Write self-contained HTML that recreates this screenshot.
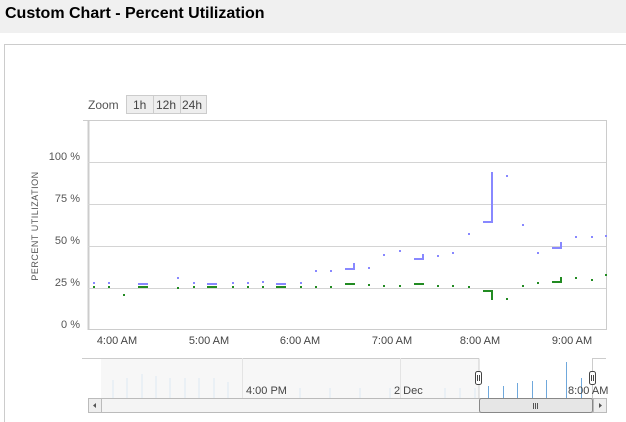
<!DOCTYPE html>
<html><head><meta charset="utf-8"><style>
html,body{margin:0;width:626px;height:422px;background:#fff;font-family:"Liberation Sans",sans-serif;overflow:hidden;position:relative}
.t{position:absolute;left:0;top:0;width:626px;height:33px;background:#f0f0f0;font-weight:bold;font-size:16px;line-height:28px;padding-left:5px;box-sizing:border-box;color:#000}
.box{position:absolute;left:4px;top:44px;width:621px;height:377px;border:1px solid #ccc;border-bottom:none;border-right:none}
svg{position:absolute;left:0;top:0}
</style></head><body>
<div class="t">Custom Chart - Percent Utilization</div>
<div class="box"></div>
<svg width="626" height="422" font-family="Liberation Sans, DejaVu Sans, sans-serif">
<text x="88" y="109" font-size="12" fill="#555">Zoom</text>
<rect x="126.5" y="95.5" width="80" height="18" fill="#eee" stroke="#ccc"/>
<line x1="153.5" y1="96" x2="153.5" y2="113" stroke="#ccc"/><line x1="180.5" y1="96" x2="180.5" y2="113" stroke="#ccc"/>
<text x="133" y="109" font-size="12" fill="#444">1h</text><text x="156" y="109" font-size="12" fill="#444">12h</text><text x="182" y="109" font-size="12" fill="#444">24h</text>
<line x1="83" y1="120.5" x2="607" y2="120.5" stroke="#ccc"/>
<line x1="88.5" y1="121" x2="88.5" y2="330" stroke="#ccc" stroke-width="2"/>
<line x1="606.5" y1="121" x2="606.5" y2="330" stroke="#ccc"/>
<g stroke="#d4d4d4"><line x1="88" y1="162.5" x2="606" y2="162.5"/><line x1="88" y1="204.5" x2="606" y2="204.5"/><line x1="88" y1="246.5" x2="606" y2="246.5"/><line x1="88" y1="288.5" x2="606" y2="288.5"/></g>
<line x1="88" y1="329.5" x2="607" y2="329.5" stroke="#ccc"/>
<g font-size="11" fill="#555" text-anchor="end"><text x="80" y="160">100 %</text><text x="80" y="202">75 %</text><text x="80" y="244">50 %</text><text x="80" y="286">25 %</text><text x="80" y="328">0 %</text></g>
<text transform="translate(38,226) rotate(-90)" font-size="9" fill="#555" text-anchor="middle" letter-spacing=".5">PERCENT UTILIZATION</text>
<g font-size="11" fill="#444" text-anchor="middle"><text x="117" y="344">4:00 AM</text><text x="209" y="344">5:00 AM</text><text x="300" y="344">6:00 AM</text><text x="392" y="344">7:00 AM</text><text x="480" y="344">8:00 AM</text><text x="572" y="344">9:00 AM</text></g>
<g fill="#8888ff">
<rect x="93" y="282" width="2" height="2"/><rect x="108" y="282" width="2" height="2"/><rect x="177" y="277" width="2" height="2"/><rect x="193" y="282" width="2" height="2"/><rect x="232" y="282" width="2" height="2"/><rect x="247" y="282" width="2" height="2"/><rect x="262" y="281" width="2" height="2"/><rect x="300" y="282" width="2" height="2"/><rect x="315" y="270" width="2" height="2"/><rect x="330" y="270" width="2" height="2"/><rect x="368" y="267" width="2" height="2"/><rect x="383" y="254" width="2" height="2"/><rect x="399" y="250" width="2" height="2"/><rect x="437" y="255" width="2" height="2"/><rect x="452" y="252" width="2" height="2"/><rect x="468" y="233" width="2" height="2"/><rect x="506" y="175" width="2" height="2"/><rect x="522" y="224" width="2" height="2"/><rect x="537" y="252" width="2" height="2"/><rect x="575" y="236" width="2" height="2"/><rect x="591" y="236" width="2" height="2"/><rect x="605" y="235" width="2" height="2"/><rect x="560" y="247" width="2" height="2"/>
<rect x="138" y="283" width="10" height="2"/><rect x="207" y="283" width="10" height="2"/><rect x="276" y="283" width="10" height="2"/><rect x="345" y="268" width="10" height="2"/><rect x="353" y="263" width="2" height="6"/><rect x="414" y="258" width="10" height="2"/><rect x="422" y="254" width="2" height="5"/><rect x="483" y="221" width="10" height="2"/><rect x="491" y="172" width="2" height="50"/><rect x="552" y="247" width="10" height="2"/><rect x="560" y="242" width="2" height="6"/>
</g>
<g fill="#228b22">
<rect x="93" y="286" width="2" height="2"/><rect x="108" y="286" width="2" height="2"/><rect x="123" y="294" width="2" height="2"/><rect x="177" y="287" width="2" height="2"/><rect x="193" y="286" width="2" height="2"/><rect x="232" y="286" width="2" height="2"/><rect x="247" y="286" width="2" height="2"/><rect x="262" y="286" width="2" height="2"/><rect x="300" y="286" width="2" height="2"/><rect x="315" y="286" width="2" height="2"/><rect x="330" y="286" width="2" height="2"/><rect x="368" y="284" width="2" height="2"/><rect x="383" y="285" width="2" height="2"/><rect x="399" y="285" width="2" height="2"/><rect x="437" y="285" width="2" height="2"/><rect x="452" y="285" width="2" height="2"/><rect x="468" y="286" width="2" height="2"/><rect x="506" y="298" width="2" height="2"/><rect x="522" y="285" width="2" height="2"/><rect x="537" y="282" width="2" height="2"/><rect x="575" y="277" width="2" height="2"/><rect x="591" y="279" width="2" height="2"/><rect x="605" y="274" width="2" height="2"/>
<rect x="138" y="286" width="10" height="2"/><rect x="207" y="286" width="10" height="2"/><rect x="276" y="286" width="10" height="2"/><rect x="345" y="283" width="10" height="2"/><rect x="414" y="283" width="10" height="2"/><rect x="483" y="290" width="10" height="2"/><rect x="491" y="290" width="2" height="10"/><rect x="552" y="281" width="10" height="2"/><rect x="560" y="277" width="2" height="5"/>
</g>
<rect x="101" y="358" width="378" height="40" fill="#f7f7f7"/>
<line x1="82" y1="358.5" x2="479" y2="358.5" stroke="#ccc"/><line x1="479" y1="358.5" x2="479" y2="398" stroke="#ccc"/>
<line x1="592" y1="358.5" x2="606" y2="358.5" stroke="#ccc"/><line x1="592.5" y1="358.5" x2="592.5" y2="398" stroke="#ccc"/>
<line x1="242.5" y1="358" x2="242.5" y2="398" stroke="#e4e4e4"/><line x1="400.5" y1="358" x2="400.5" y2="398" stroke="#e4e4e4"/>
<g stroke="#dce8f3"><line x1="113" y1="380" x2="113" y2="398"/><line x1="127" y1="378" x2="127" y2="398"/><line x1="142" y1="374" x2="142" y2="398"/><line x1="156" y1="376" x2="156" y2="398"/><line x1="170" y1="378" x2="170" y2="398"/><line x1="185" y1="378" x2="185" y2="398"/><line x1="199" y1="378" x2="199" y2="398"/><line x1="214" y1="378" x2="214" y2="398"/><line x1="228" y1="382" x2="228" y2="398"/><line x1="300" y1="388" x2="300" y2="398"/><line x1="330" y1="388" x2="330" y2="398"/><line x1="360" y1="388" x2="360" y2="398"/><line x1="390" y1="388" x2="390" y2="398"/><line x1="445" y1="388" x2="445" y2="398"/><line x1="460" y1="388" x2="460" y2="398"/><line x1="475" y1="388" x2="475" y2="398"/></g>
<g stroke="#6fa8dc"><line x1="488.5" y1="386" x2="488.5" y2="398"/><line x1="503.5" y1="386" x2="503.5" y2="398"/><line x1="517.5" y1="383" x2="517.5" y2="398"/><line x1="532.5" y1="381" x2="532.5" y2="398"/><line x1="546.5" y1="380" x2="546.5" y2="398"/><line x1="566.5" y1="362" x2="566.5" y2="398"/><line x1="581.5" y1="378" x2="581.5" y2="398"/></g>
<text x="246" y="394" font-size="11" fill="#444">4:00 PM</text><text x="394" y="394" font-size="11" fill="#444">2 Dec</text><text x="568" y="394" font-size="11" fill="#444">8:00 AM</text>
<rect x="475.5" y="371.5" width="6" height="13" rx="2" fill="#fff" stroke="#444"/><line x1="477.5" y1="375" x2="477.5" y2="381" stroke="#444"/><line x1="479.5" y1="375" x2="479.5" y2="381" stroke="#444"/>
<rect x="589.5" y="371.5" width="6" height="13" rx="2" fill="#fff" stroke="#444"/><line x1="591.5" y1="375" x2="591.5" y2="381" stroke="#444"/><line x1="593.5" y1="375" x2="593.5" y2="381" stroke="#444"/>
<rect x="88.5" y="398.5" width="518" height="14" fill="#f4f4f4" stroke="#bbb"/>
<rect x="88.5" y="398.5" width="13" height="14" fill="#eee" stroke="#bbb"/><rect x="593.5" y="398.5" width="13" height="14" fill="#eee" stroke="#bbb"/>
<path d="M96 403 L93 405.5 L96 408Z" fill="#555"/><path d="M599 403 L602 405.5 L599 408Z" fill="#555"/>
<rect x="479.5" y="398.5" width="113" height="14" rx="2" fill="#e6e6e6" stroke="#888"/>
<g stroke="#555"><line x1="533.5" y1="403" x2="533.5" y2="409"/><line x1="535.5" y1="403" x2="535.5" y2="409"/><line x1="537.5" y1="403" x2="537.5" y2="409"/></g>
</svg>
</body></html>
